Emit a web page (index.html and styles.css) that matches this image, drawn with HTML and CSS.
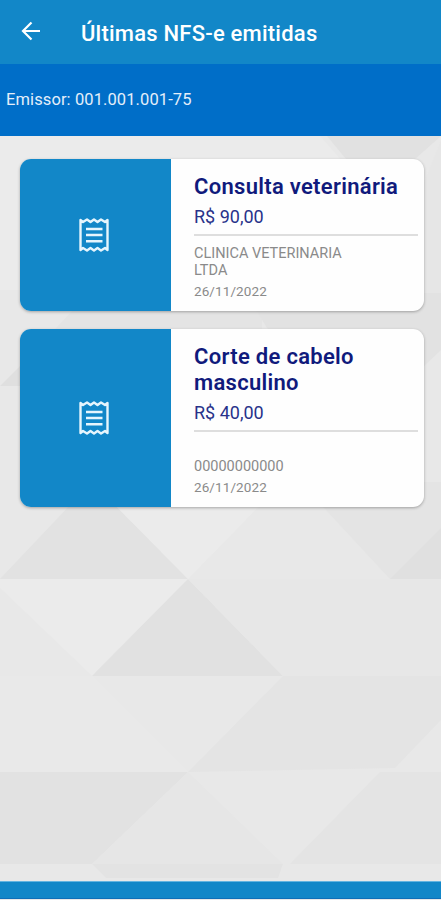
FILE: index.html
```html
<!DOCTYPE html>
<html lang="pt-BR">
<head>
  <meta charset="UTF-8" />
  <meta name="viewport" content="width=device-width, initial-scale=1.0"/>
  <title>Últimas NFS-e emitidas</title>
  <link rel="stylesheet" href="styles.css">
</head>

<body>
  <!-- Fundo com triângulos -->
  <svg class="fundo" viewBox="0 0 441 900" aria-hidden="true">
    <rect width="441" height="900" fill="#e8e8e8"/>
    <path d="M0 136H320L350 170L310 290H0z" fill="#ebebeb"/>
    <path d="M327 136H441L415 159H346z" fill="#e1e1e1"/>
    <path d="M441 140V294H380z" fill="#e6e6e6"/>
    <path d="M55 329L75 308H262V329z" fill="#e4e4e4"/>
    <path d="M255 308L424 293H441V350L424 366H290z" fill="#e2e2e2"/>
    <path d="M0 386L24 362V386z" fill="#dfdfdf"/>
    <path d="M0 579L92 482L188 579z" fill="#e2e2e2"/>
    <path d="M188 579L92 482H283z" fill="#ebebeb"/>
    <path d="M300 482H441V530L390 579z" fill="#e4e4e4"/>
    <path d="M390 579L441 528V579z" fill="#e0e0e0"/>
    <path d="M0 579H188L92 676L0 588z" fill="#ebebeb"/>
    <path d="M188 579L283 676H92z" fill="#e1e1e1"/>
    <path d="M188 579H441V676H283z" fill="#e7e7e7"/>
    <path d="M0 676H92L188 772H0z" fill="#e9e9e9"/>
    <path d="M283 676H441V720L395 768L188 772z" fill="#e4e4e4"/>
    <path d="M0 772H188L92 864H0z" fill="#e2e2e2"/>
    <path d="M188 772L283 864H92z" fill="#e6e6e6"/>
    <path d="M380 772H441V864H290z" fill="#e4e4e4"/>
    <path d="M92 864H283L278 878H106z" fill="#e3e3e3"/>
  </svg>

  <header>
    <svg class="voltar" viewBox="0 0 20 20">
      <path d="M19 10H2M10.5 1.5L2 10L10.5 18.5"/>
    </svg>
    <h1>Últimas NFS-e emitidas</h1>
  </header>

  <div class="emissor">Emissor: 001.001.001-75</div>

  <main>
    <div class="nota-card">
      <div class="nota-icone">
        <svg viewBox="0 0 32 36">
          <path d="M2.5 3L5 5L9 2.5L12.5 5L16 2.5L19.5 5L23 2.5L27 5L29.5 3V33L27 31L23 33.5L19.5 31L16 33.5L12.5 31L9 33.5L5 31L2.5 33z"/>
          <path d="M8 12H24.5M8 18H24.5M8 24.2H24.5"/>
        </svg>
      </div>
      <div class="nota-info">
        <h2>Consulta veterinária</h2>
        <p class="valor">R$ 90,00</p>
        <p class="cliente">CLINICA VETERINARIA LTDA</p>
        <p class="data">26/11/2022</p>
      </div>
    </div>

    <div class="nota-card">
      <div class="nota-icone">
        <svg viewBox="0 0 32 36">
          <path d="M2.5 3L5 5L9 2.5L12.5 5L16 2.5L19.5 5L23 2.5L27 5L29.5 3V33L27 31L23 33.5L19.5 31L16 33.5L12.5 31L9 33.5L5 31L2.5 33z"/>
          <path d="M8 12H24.5M8 18H24.5M8 24.2H24.5"/>
        </svg>
      </div>
      <div class="nota-info">
        <h2>Corte de cabelo masculino</h2>
        <p class="valor">R$ 40,00</p>
        <p class="cliente"><br>00000000000</p>
        <p class="data">26/11/2022</p>
      </div>
    </div>
  </main>

  <footer></footer>
</body>
</html>
```
FILE: styles.css
```css
* {
  box-sizing: border-box;
}
body {
  margin: 0;
  height: 900px;
  display: flex;
  flex-direction: column;
  font-family: Roboto, sans-serif;
  background-color: #e8e8e8;
  overflow: hidden;
}
.fundo {
  position: absolute;
  top: 0;
  left: 0;
  width: 441px;
  height: 900px;
  z-index: -1;
}
h1, h2, p {
  margin: 0;
}
header {
  height: 64px;
  padding-left: 21px;
  padding-top: 2px;
  display: flex;
  align-items: center;
  gap: 40px;
  background-color: #1287c8;
  color: white;
}
.voltar {
  width: 20px;
  height: 20px;
  margin-bottom: 4px;
  fill: none;
  stroke: white;
  stroke-width: 2.2;
}
header h1 {
  font-size: 22px;
  font-weight: 500;
  letter-spacing: 0.22px;
}
.emissor {
  height: 72px;
  padding-left: 6px;
  line-height: 71px;
  background-color: #006ec8;
  color: #e4effa;
  font-size: 16.5px;
  letter-spacing: 0.1px;
}
main {
  flex: 1;
  padding: 23px 17px 0 20px;
}
.nota-card {
  display: flex;
  min-height: 152px;
  margin-bottom: 18px;
  background: #fefefe;
  border-radius: 11px;
  overflow: hidden;
  box-shadow: 0 1px 3px rgba(0,0,0,0.3);
}
.nota-icone {
  width: 151px;
  padding-right: 3px;
  display: flex;
  align-items: center;
  justify-content: center;
  background-color: #1287c8;
}
.nota-icone svg {
  width: 32px;
  height: 36px;
  margin-bottom: 1px;
  fill: none;
  stroke: #e6f5fd;
  stroke-width: 2.4;
  stroke-linejoin: round;
}
.nota-info {
  flex: 1;
  padding: 15px 6px 12px 23px;
}
.nota-info h2 {
  color: #101a7c;
  font-size: 22px;
  font-weight: 600;
  line-height: 26px;
  letter-spacing: 0.3px;
}
.valor {
  height: 36px;
  padding-top: 6px;
  border-bottom: 2px solid #dedede;
  color: #28328a;
  font-size: 18px;
  line-height: 22px;
}
.cliente {
  width: 160px;
  margin-top: 9px;
  color: #8a8a8a;
  font-size: 14.5px;
  line-height: 17px;
}
.data {
  margin-top: 4px;
  color: #8a8a8a;
  font-size: 13.5px;
  line-height: 16px;
  letter-spacing: 0.1px;
}
footer {
  height: 18px;
  margin-bottom: 1px;
  background-color: #1287c8;
  border-top: 1px solid #64b4e0;
  border-bottom: 1px solid #0f6fb8;
}
```
